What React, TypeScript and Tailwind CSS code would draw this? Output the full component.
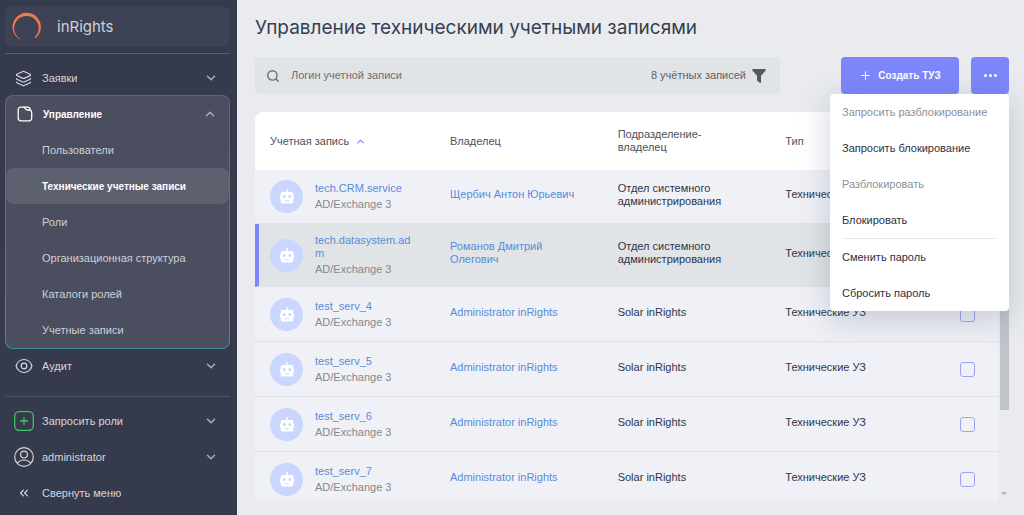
import { useState, type ReactNode } from 'react';
import { ChevronDown, ChevronUp, ChevronsLeft, Layers, Plus, Search } from 'lucide-react';

interface Account {
  login: string;
  system: string;
  owner: string;
  department: string;
  type: string;
}

const sections = [
  'Пользователи',
  'Технические учетные записи',
  'Роли',
  'Организационная структура',
  'Каталоги ролей',
  'Учетные записи',
];

const accounts: Account[] = [
  {
    login: 'tech.CRM.service',
    system: 'AD/Exchange 3',
    owner: 'Щербич Антон Юрьевич',
    department: 'Отдел системного администрирования',
    type: 'Технические УЗ',
  },
  {
    login: 'tech.datasystem.adm',
    system: 'AD/Exchange 3',
    owner: 'Романов Дмитрий Олегович',
    department: 'Отдел системного администрирования',
    type: 'Технические УЗ',
  },
  ...['test_serv_4', 'test_serv_5', 'test_serv_6', 'test_serv_7'].map((login) => ({
    login,
    system: 'AD/Exchange 3',
    owner: 'Administrator inRights',
    department: 'Solar inRights',
    type: 'Технические УЗ',
  })),
];

const menuItems = [
  { label: 'Запросить разблокирование', disabled: true },
  { label: 'Запросить блокирование', disabled: false },
  { label: 'Разблокировать', disabled: true },
  { label: 'Блокировать', disabled: false },
  null,
  { label: 'Сменить пароль', disabled: false },
  { label: 'Сбросить пароль', disabled: false },
];

function Logo() {
  return (
    <svg viewBox="0 0 30 30" className="h-[30px] w-[30px]" fill="#f07a45" aria-hidden="true">
      <path d="M8.2 27.6A14.2 14.2 0 1 1 23.4 26.2L22.6 25.4A12.3 12.3 0 1 0 7.8 26.6Z" />
    </svg>
  );
}

function FolderIcon() {
  return (
    <svg viewBox="0 0 16 16" className="h-4 w-4" fill="none" stroke="currentColor" strokeWidth="1.3" aria-hidden="true">
      <path d="M3.5 1.2H6.5C8.5 1.2 8.2 4 10.3 4H12.3A2.4 2.4 0 0 1 14.7 6.4V12.3A2.5 2.5 0 0 1 12.2 14.8H3.7A2.5 2.5 0 0 1 1.2 12.3V3.5A2.3 2.3 0 0 1 3.5 1.2Z" />
      <path d="M6.5 1.2H10.8A2.6 2.6 0 0 1 13.3 4.2" />
    </svg>
  );
}

function EyeIcon() {
  return (
    <svg viewBox="0 0 18 16" className="h-4 w-[18px]" fill="none" stroke="currentColor" strokeWidth="1.2" aria-hidden="true">
      <path d="M1.1 8C2 4.3 5.2 1.5 9 1.5S16 4.3 16.9 8C16 11.7 12.8 14.5 9 14.5S2 11.7 1.1 8Z" />
      <circle cx="9" cy="8" r="2.8" />
    </svg>
  );
}

function AddRoleIcon() {
  return (
    <svg viewBox="0 0 20 20" className="h-5 w-5" fill="none" stroke="#3fc463" strokeWidth="1.3" aria-hidden="true">
      <rect x="0.7" y="0.7" width="18.6" height="18.6" rx="4.5" />
      <path d="M10 6V14M6 10H14" />
    </svg>
  );
}

function UserIcon() {
  return (
    <svg viewBox="0 0 20 20" className="h-5 w-5" fill="none" stroke="currentColor" strokeWidth="1.2" aria-hidden="true">
      <circle cx="10" cy="10" r="9.3" />
      <circle cx="10" cy="7.6" r="3.4" />
      <path d="M3.4 16.4C5 14 7.3 13 10 13S15 14 16.6 16.4" />
    </svg>
  );
}

function FunnelIcon() {
  return (
    <svg viewBox="0 0 14 14" className="h-3.5 w-3.5" fill="#555a60" aria-hidden="true">
      <path d="M1.2 0H12.8C13.8 0 14.1 1 13.4 1.8L9 6.8V13.2C9 13.9 8.3 14.1 7.8 13.7L5.5 11.9C5.2 11.7 5 11.4 5 11V6.8L0.6 1.8C-0.1 1 0.2 0 1.2 0Z" />
    </svg>
  );
}

function RobotAvatar() {
  return (
    <span className="flex h-[33px] w-[33px] shrink-0 items-center justify-center rounded-full bg-[#cbd6fe]">
      <svg viewBox="0 0 14 15" className="h-[15px] w-3.5" aria-hidden="true">
        <path
          fill="#fff"
          fillRule="evenodd"
          d="M6.3 0H7.7V3H11.9A1.3 1.3 0 0 1 13.2 4.3V6.8H14V10.6H13.2V13A1.5 1.5 0 0 1 11.7 14.5H2.3A1.5 1.5 0 0 1 0.8 13V10.6H0V6.8H0.8V4.3A1.3 1.3 0 0 1 2.1 3H6.3ZM4.2 5.9A1.5 1.5 0 1 0 4.2 8.9 1.5 1.5 0 0 0 4.2 5.9ZM9.8 5.9A1.5 1.5 0 1 0 9.8 8.9 1.5 1.5 0 0 0 9.8 5.9ZM5 11.2V12.2H9V11.2Z"
        />
      </svg>
    </span>
  );
}

function NavRow({ icon, label, chevron, active }: { icon: ReactNode; label: string; chevron?: 'up' | 'down'; active?: boolean }) {
  return (
    <button
      className={`flex h-9 w-full items-center pr-3 pl-2 text-left ${active ? 'text-[10px] font-bold text-white' : 'text-[#d6d7dc]'}`}
    >
      <span className="mr-2 flex w-[21px] shrink-0 justify-center">{icon}</span>
      <span className="flex-1">{label}</span>
      {chevron === 'down' && <ChevronDown size={14} strokeWidth={2.8} className="text-[#a6a9b2]" />}
      {chevron === 'up' && <ChevronUp size={14} strokeWidth={2.8} className="text-[#a6a9b2]" />}
    </button>
  );
}

function Sidebar() {
  const [current, setCurrent] = useState(sections[1]);

  return (
    <aside className="flex w-[237px] shrink-0 flex-col bg-[#353a4d] pt-1.5 pr-[7px] pb-1 pl-[5px]">
      <div className="flex h-[41px] items-center gap-[15px] rounded-lg bg-[#3d4255] pl-[7px] font-['Inter','Liberation_Sans',sans-serif] text-[15px] text-[#d0d1d6]">
        <Logo />
        <span>inRights</span>
      </div>
      <div className="mt-1.5 mb-1.5 border-t border-[#585c6e]" />

      <nav>
        <NavRow icon={<Layers size={17} strokeWidth={1.6} />} label="Заявки" chevron="down" />
        <div className="-my-px rounded-lg bg-linear-to-b from-[#7d4f9c] via-[#56709f] to-[#3b929c] p-px">
          <div className="rounded-[7px] bg-[#4b4e5f]">
            <NavRow icon={<FolderIcon />} label="Управление" chevron="up" active />
            {sections.map((name) => (
              <a
                key={name}
                href="#"
                onClick={() => setCurrent(name)}
                className={`flex h-9 items-center rounded-lg pl-9 ${
                  name === current ? 'bg-[#5d606f] text-[10px] font-bold text-white' : 'text-[#ced0d6]'
                }`}
              >
                {name}
              </a>
            ))}
          </div>
        </div>
        <NavRow icon={<EyeIcon />} label="Аудит" chevron="down" />
      </nav>

      <div className="mt-auto border-t border-[#4f5365] pt-1.5">
        <NavRow icon={<AddRoleIcon />} label="Запросить роли" chevron="down" />
        <NavRow icon={<UserIcon />} label="administrator" chevron="down" />
        <NavRow icon={<ChevronsLeft size={14} />} label="Свернуть меню" />
      </div>
    </aside>
  );
}

function ActionsMenu() {
  return (
    <div className="absolute top-full right-0 z-10 w-[179px] rounded-sm bg-white px-3 shadow-[0_8px_32px_rgba(60,70,110,0.25)]">
      {menuItems.map((item, i) =>
        item ? (
          <button
            key={item.label}
            disabled={item.disabled}
            className="flex h-9 w-full items-center text-left whitespace-nowrap text-[#2c3144] disabled:text-[#8d9097]"
          >
            {item.label}
          </button>
        ) : (
          <hr key={i} className="border-[#e6e8ec]" />
        )
      )}
    </div>
  );
}

export default function App() {
  const [menuOpen, setMenuOpen] = useState(true);

  return (
    <div className="flex h-screen overflow-hidden bg-[#e9ebef] font-['Liberation_Sans',Arial,sans-serif] text-[11px] leading-[13px] text-[#2f3547]">
      <Sidebar />

      <main className="flex min-w-0 flex-1 flex-col pt-3.5 pr-[15px] pb-3.5 pl-[18px]">
        <h1 className="mb-[15px] font-['Inter','Liberation_Sans',sans-serif] text-[19px] leading-7 text-[#34404f]">
          Управление техническими учетными записями
        </h1>

        <div className="mb-[18px] flex items-center">
          <label className="mr-[61px] flex h-[37px] flex-1 items-center rounded-sm bg-[#e0e4e7] pr-3.5 pl-[11px] text-[#5e6268]">
            <Search size={14} strokeWidth={2.4} className="mr-[11px] text-[#6c7079]" />
            <input
              aria-label="Логин учетной записи"
              placeholder="Логин учетной записи"
              className="min-w-0 flex-1 bg-transparent outline-none placeholder:text-[#6a6e73]"
            />
            <span className="mr-1.5">8 учётных записей</span>
            <FunnelIcon />
          </label>
          <button className="mr-3 flex h-[37px] w-[118px] items-center justify-center gap-1.5 rounded-sm bg-[#7d87fb] text-[10px] font-bold text-white">
            <Plus size={13} strokeWidth={1.8} />
            Создать ТУЗ
          </button>
          <div className="relative">
            <button
              aria-label="Действия"
              onClick={() => setMenuOpen(!menuOpen)}
              className="flex h-[37px] w-[38px] items-center justify-center gap-0.5 rounded-sm bg-[#7d87fb]"
            >
              <span className="h-[3px] w-[3px] rounded-full bg-white" />
              <span className="h-[3px] w-[3px] rounded-full bg-white" />
              <span className="h-[3px] w-[3px] rounded-full bg-white" />
            </button>
            {menuOpen && <ActionsMenu />}
          </div>
        </div>

        <div className="flex min-h-0 flex-1">
          <div className="min-w-0 flex-1 overflow-hidden rounded-t-lg bg-[#f0f1f6]">
            <table className="w-full table-fixed border-separate border-spacing-0">
              <thead className="bg-white text-left text-[#4d525a]">
                <tr className="h-[58px]">
                  <th className="w-[180px] pl-[15px] font-normal">
                    <span className="flex items-center gap-1.5">
                      Учетная запись
                      <ChevronUp size={11} strokeWidth={3} className="text-[#8a92f5]" />
                    </span>
                  </th>
                  <th className="pl-[15px] font-normal">Владелец</th>
                  <th className="pr-8 pl-[15px] font-normal">Подразделение-владелец</th>
                  <th className="pl-[15px] font-normal">Тип</th>
                  <th className="w-[60px]" />
                </tr>
              </thead>
              <tbody>
                {accounts.map((account, i) => (
                  <tr
                    key={account.login}
                    className={`*:border-b *:border-b-[#dfe2e8] ${i === 1 ? 'h-[63px] bg-[#e0e4e7]' : i === 0 ? 'h-[54px]' : 'h-[55px]'}`}
                  >
                    <td className={i === 1 ? 'border-l-4 border-l-[#7d87fb] pl-[11px]' : 'pl-[15px]'}>
                      <div className="flex items-center gap-3">
                        <RobotAvatar />
                        <div className="w-24">
                          <a href="#" className="block break-all text-[#5a8bd8]">{account.login}</a>
                          <div className="mt-[3px] text-[#85888f]">{account.system}</div>
                        </div>
                      </div>
                    </td>
                    <td className="pr-5 pb-1 pl-[15px]">
                      <a href="#" className="text-[#5a8bd8]">{account.owner}</a>
                    </td>
                    <td className="pr-5 pb-1 pl-[15px]">{account.department}</td>
                    <td className="pb-1 pl-[15px]">{account.type}</td>
                    <td className="pl-[22px]">
                      <input
                        type="checkbox"
                        aria-label={account.login}
                        className="block h-[15px] w-[15px] appearance-none rounded-[3px] border border-[#9da5f2] checked:bg-[#7d87fb]"
                      />
                    </td>
                  </tr>
                ))}
              </tbody>
            </table>
          </div>
          <div className="flex w-[11px] flex-col items-center justify-between pb-1.5 pl-px" aria-hidden="true">
            <div className="h-[298px] w-[9px] bg-[#c1c4cb]" />
            <svg viewBox="0 0 6 3" className="h-[3px] w-1.5" fill="#aeb2b9">
              <path d="M0 0H6L3 3Z" />
            </svg>
          </div>
        </div>
      </main>
    </div>
  );
}
